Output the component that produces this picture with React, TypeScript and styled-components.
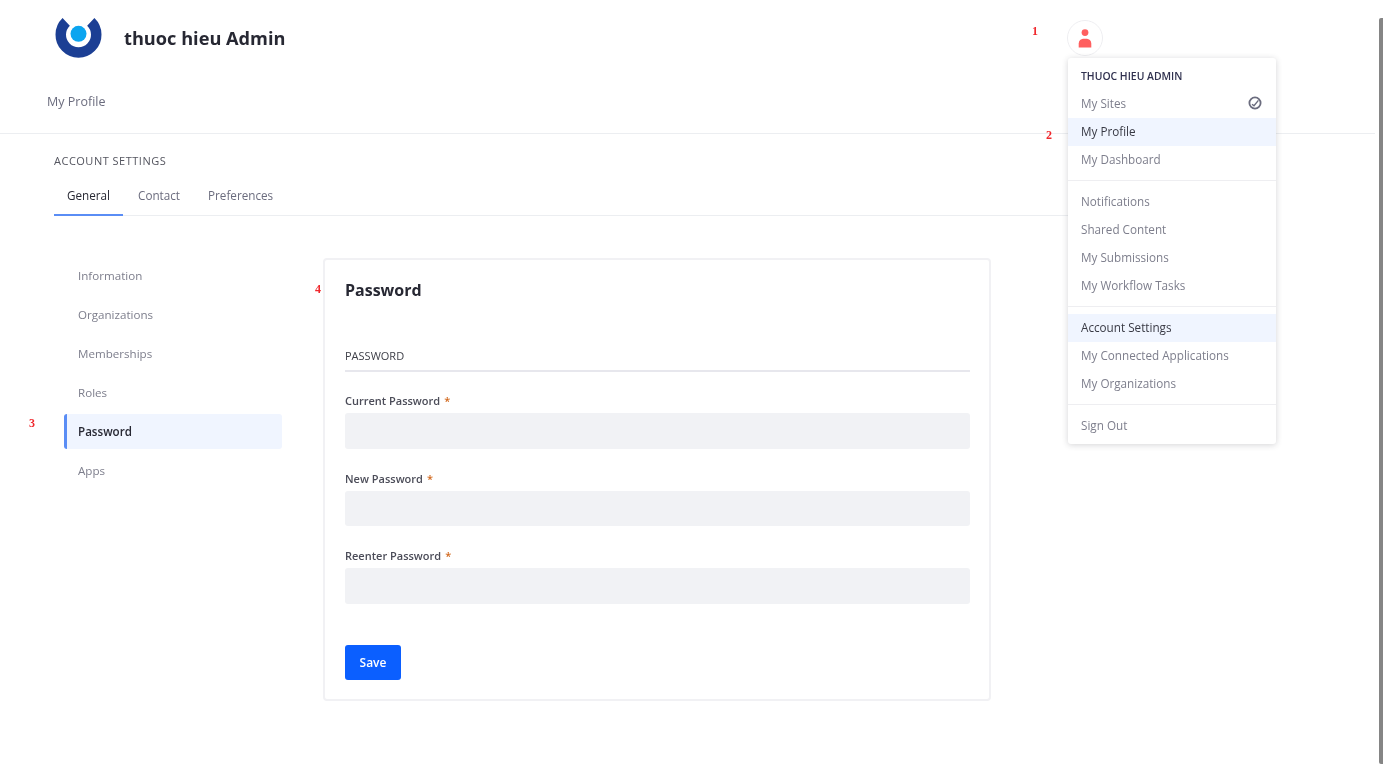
import React from "react";
import styled, { createGlobalStyle } from "styled-components";

const Global = createGlobalStyle`
  html, body { margin: 0; padding: 0; height: 100%; background: #fff; overflow: hidden; }
  body { font-family: "Open Sans", "Noto Sans", "Liberation Sans", sans-serif; color: #6b6c7e; }
  * { box-sizing: border-box; }
`;

const Page = styled.div`
  position: relative;
  width: 1383px;
  height: 766px;
  overflow: hidden;
  filter: blur(0.7px);
`;

const Header = styled.header`
  display: flex;
  align-items: center;
  height: 76px;
  padding-left: 55px;
`;

const Title = styled.h1`
  margin: 0 0 1px 22px;
  font-size: 18.2px;
  font-weight: 700;
  color: #272833;
`;

const Avatar = styled.div`
  display: flex;
  align-items: center;
  justify-content: center;
  width: 36px;
  height: 36px;
  margin-left: 781px;
  border: 1px solid #eeeef1;
  border-radius: 50%;
`;

const Crumb = styled.div`
  height: 58px;
  padding: 17px 0 0 47px;
  font-size: 12.5px;
  line-height: 18px;
  border-bottom: 1px solid #eceef1;
  margin-right: 8px;
`;

const Section = styled.section`
  padding: 19px 0 0 54px;
`;

const Eyebrow = styled.div`
  font-size: 11px;
  letter-spacing: 0.5px;
  line-height: 16px;
  color: #54555f;
  text-transform: uppercase;
`;

const Tabs = styled.nav`
  display: flex;
  height: 45px;
  margin: 2px 110px 0 0;
  border-bottom: 1px solid #eceef1;
`;

const Tab = styled.div<{ $active?: boolean }>`
  padding: 15px 13px 0;
  margin-right: 2px;
  height: 45px;
  font-size: 11.7px;
  line-height: 18px;
  color: ${(p) => (p.$active ? "#272833" : "#6b6c7e")};
  border-bottom: 2px solid ${(p) => (p.$active ? "#5a8df5" : "transparent")};
`;

const Body = styled.div`
  display: flex;
  align-items: flex-start;
  padding: 42px 0 0 64px;
`;

const Side = styled.nav`
  display: flex;
  flex-direction: column;
  gap: 4px;
  width: 218px;
  margin-right: 41px;
`;

const SideItem = styled.div<{ $active?: boolean }>`
  height: 35px;
  padding-left: 11px;
  font-size: 11.6px;
  font-weight: ${(p) => (p.$active ? 600 : 400)};
  line-height: 35px;
  color: ${(p) => (p.$active ? "#272833" : "#7d7e8c")};
  background: ${(p) => (p.$active ? "#f0f5ff" : "transparent")};
  border-left: 3px solid ${(p) => (p.$active ? "#5a8df5" : "transparent")};
  border-radius: 3px;
`;

const Card = styled.main`
  width: 668px;
  height: 443px;
  padding: 19px 19px 0 20px;
  border: 2px solid #f1f1f4;
  border-radius: 4px;
`;

const CardTitle = styled.h2`
  margin: 0;
  font-size: 16px;
  line-height: 22px;
  font-weight: 700;
  color: #272833;
`;

const Legend = styled.div`
  margin-top: 46px;
  padding-bottom: 6px;
  font-size: 11px;
  line-height: 17px;
  color: #3f4049;
  border-bottom: 2px solid #e7e7ed;
`;

const Field = styled.div`
  margin-top: 21px;
  & + & { margin-top: 22px; }
`;

const Label = styled.label`
  display: block;
  height: 20px;
  font-size: 11px;
  font-weight: 600;
  line-height: 16px;
  color: #4b4c58;
`;

const Req = styled.span`
  margin-left: 4px;
  color: #d2691e;
`;

const Input = styled.div`
  height: 35.5px;
  background: #f1f2f5;
  border-radius: 3px;
`;

const Save = styled.button`
  display: block;
  width: 56px;
  height: 35px;
  margin-top: 41.5px;
  padding: 0;
  border: 0;
  border-radius: 3px;
  background: #0b5fff;
  color: #fff;
  font: 600 12px "Open Sans", sans-serif;
`;

const Menu = styled.div`
  position: absolute;
  left: 1068px;
  top: 58px;
  width: 208px;
  height: 386px;
  padding-top: 4px;
  background: #fff;
  border-radius: 3px;
  box-shadow: 0 1px 6px rgba(39, 40, 51, 0.2);
`;

const MenuHeader = styled.div`
  padding-left: 13px;
  height: 28px;
  font-size: 10.4px;
  font-weight: 600;
  line-height: 28px;
  color: #30314f;
  text-transform: uppercase;
`;

const MenuItem = styled.div<{ $active?: boolean }>`
  display: flex;
  align-items: center;
  justify-content: space-between;
  height: 28px;
  padding: 0 14px 2px 13px;
  font-size: 11.7px;
  color: ${(p) => (p.$active ? "#383944" : "#7d7e8c")};
  background: ${(p) => (p.$active ? "#f0f5ff" : "transparent")};
`;

const Divider = styled.div`
  height: 1px;
  margin: 6px 0 7px;
  background: #eeeef1;
`;

const Note = styled.span<{ $x: number; $y: number }>`
  position: absolute;
  left: ${(p) => p.$x}px;
  top: ${(p) => p.$y}px;
  font: 700 12px/14px "Liberation Serif", serif;
  color: #f0282d;
`;

const Scrollbar = styled.div`
  position: absolute;
  right: 0;
  top: 18px;
  width: 4px;
  height: 746px;
  background: #858585;
  border-radius: 2px 0 0 2px;
`;

const Logo = () => (
  <svg width="47" height="41" viewBox="0 0 47 41" aria-hidden="true">
    <path d="M11.2 3.9 A 17.75 17.75 0 1 0 35.8 3.9" fill="none" stroke="#1c3f94" strokeWidth="10.5" />
    <circle cx="23.5" cy="15.8" r="8" fill="#0ba5f0" />
  </svg>
);

const UserIcon = () => (
  <svg width="14" height="19" viewBox="0 0 14 19" aria-hidden="true">
    <circle cx="7" cy="3.6" r="3.4" fill="#ff5f5f" />
    <path d="M0.7 18.5 V14.5 C0.7 11.5 3 10 5 9.8 H9 C11 10 13.3 11.5 13.3 14.5 V18.5 Z" fill="#ff5f5f" />
  </svg>
);

const SitesIcon = () => (
  <svg width="14" height="14" viewBox="0 0 14 14" aria-hidden="true">
    <circle cx="7" cy="7" r="5.6" fill="none" stroke="#6b6c7e" strokeWidth="1.8" />
    <path d="M4 8.2 L6 9.8 L10.4 4.4" fill="none" stroke="#6b6c7e" strokeWidth="1.4" />
  </svg>
);

const sideItems = ["Information", "Organizations", "Memberships", "Roles", "Password", "Apps"];
const fields = ["Current Password", "New Password", "Reenter Password"];

export default function App() {
  return (
    <Page>
      <Global />
      <Header>
        <Logo />
        <Title>thuoc hieu Admin</Title>
        <Avatar><UserIcon /></Avatar>
      </Header>
      <Crumb>My Profile</Crumb>
      <Section>
        <Eyebrow>Account Settings</Eyebrow>
        <Tabs>
          <Tab $active>General</Tab>
          <Tab>Contact</Tab>
          <Tab>Preferences</Tab>
        </Tabs>
      </Section>
      <Body>
        <Side>
          {sideItems.map((s) => (
            <SideItem key={s} $active={s === "Password"}>{s}</SideItem>
          ))}
        </Side>
        <Card>
          <CardTitle>Password</CardTitle>
          <Legend>PASSWORD</Legend>
          {fields.map((f) => (
            <Field key={f}>
              <Label>{f}<Req>*</Req></Label>
              <Input />
            </Field>
          ))}
          <Save>Save</Save>
        </Card>
      </Body>
      <Menu>
        <MenuHeader>thuoc hieu Admin</MenuHeader>
        <MenuItem>My Sites <SitesIcon /></MenuItem>
        <MenuItem $active>My Profile</MenuItem>
        <MenuItem>My Dashboard</MenuItem>
        <Divider />
        <MenuItem>Notifications</MenuItem>
        <MenuItem>Shared Content</MenuItem>
        <MenuItem>My Submissions</MenuItem>
        <MenuItem>My Workflow Tasks</MenuItem>
        <Divider />
        <MenuItem $active>Account Settings</MenuItem>
        <MenuItem>My Connected Applications</MenuItem>
        <MenuItem>My Organizations</MenuItem>
        <Divider />
        <MenuItem>Sign Out</MenuItem>
      </Menu>
      <Note $x={1032} $y={24}>1</Note>
      <Note $x={1046} $y={128}>2</Note>
      <Note $x={29} $y={416}>3</Note>
      <Note $x={315} $y={282}>4</Note>
      <Scrollbar />
    </Page>
  );
}
